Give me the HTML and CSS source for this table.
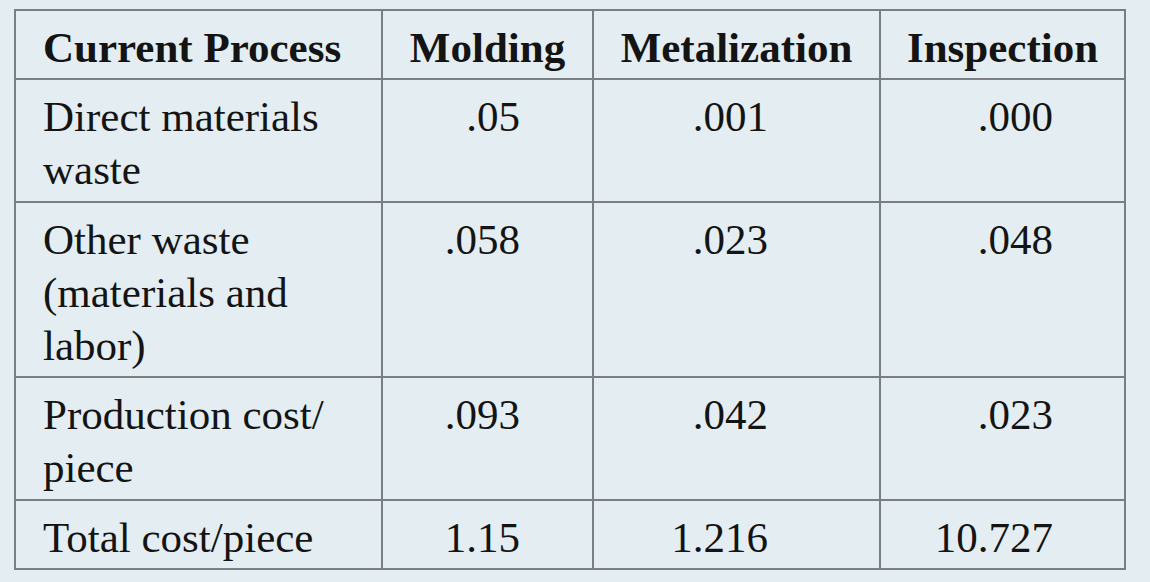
FILE: index.html
```html
<!DOCTYPE html>
<html lang="en">
<head>
  <meta charset="UTF-8">
  <title>Current Process Costs</title>
  <meta name="viewport" content="width=device-width,initial-scale=1">
  <link rel="stylesheet" href="styles.css">
</head>
<body>
  <table class="costs">
    <colgroup>
      <col class="c-label">
      <col class="c-mold">
      <col class="c-metal">
      <col class="c-insp">
    </colgroup>
    <thead>
      <tr>
        <th class="label">Current Process</th>
        <th>Molding</th>
        <th>Metalization</th>
        <th>Inspection</th>
      </tr>
    </thead>
    <tbody>
      <tr class="two">
        <td class="label">Direct materials waste</td>
        <td class="num mold">.05</td>
        <td class="num metal">.001</td>
        <td class="num insp">.000</td>
      </tr>
      <tr>
        <td class="label">Other waste (materials and labor)</td>
        <td class="num mold">.058</td>
        <td class="num metal">.023</td>
        <td class="num insp">.048</td>
      </tr>
      <tr class="two">
        <td class="label">Production cost/ piece</td>
        <td class="num mold">.093</td>
        <td class="num metal">.042</td>
        <td class="num insp">.023</td>
      </tr>
      <tr>
        <td class="label">Total cost/piece</td>
        <td class="num mold">1.15</td>
        <td class="num metal">1.216</td>
        <td class="num insp">10.727</td>
      </tr>
    </tbody>
  </table>
</body>
</html>
```

FILE: styles.css
```css
*{margin:0;padding:0;box-sizing:border-box}
html,body{background:#e4eef2}
body{font-family:"Liberation Serif","Times New Roman",serif;color:#141414;padding:9px 0 0 14px}
.costs{border-collapse:collapse;table-layout:fixed;width:1112px;font-size:43px;line-height:53px}
.c-label{width:367px}
.c-mold{width:211px}
.c-metal{width:287px}
.c-insp{width:245px}
.costs th,.costs td{border:2px solid #7b7e81;padding:10px 20px 4px;vertical-align:top}
.costs th{font-weight:bold;text-align:center}
.costs .two td{padding-bottom:5px}
.costs .label{text-align:left;padding-left:27px}
.costs .num{text-align:right}
.costs .mold{padding-right:72px}
.costs .metal{padding-right:111px}
.costs .insp{padding-right:71px}
```
